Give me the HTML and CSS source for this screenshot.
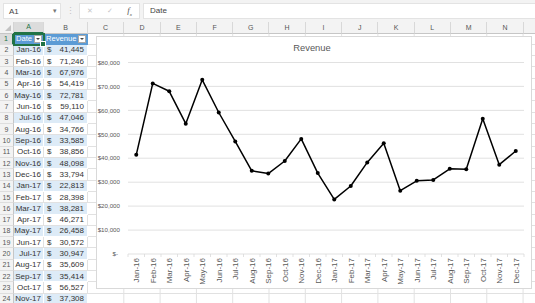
FILE: index.html
```html
<!DOCTYPE html>
<html lang="en">
<head>
    <meta charset="UTF-8">
    <meta name="viewport" content="width=device-width, initial-scale=1.0">
    <title>Revenue</title>
    <link rel="stylesheet" href="styles.css">
</head>
<body>

    <!-- Formula bar -->
    <div class="formula-bar">
        <div class="name-box"><span>A1</span><span class="caret">&#9662;</span></div>
        <div class="grip">&#8942;</div>
        <div class="fx-buttons">
            <span class="fx-btn">&#10005;</span>
            <span class="fx-btn">&#10003;</span>
            <span class="fx-btn fx">f<sub>x</sub></span>
        </div>
        <div class="formula-input">Date</div>
    </div>

    <!-- Worksheet -->
    <div class="sheet">
        <div class="col-heads">
            <div class="corner"></div>
            <div class="col-head active">A</div>
            <div class="col-head">B</div>
            <div class="col-head">C</div>
            <div class="col-head">D</div>
            <div class="col-head">E</div>
            <div class="col-head">F</div>
            <div class="col-head">G</div>
            <div class="col-head">H</div>
            <div class="col-head">I</div>
            <div class="col-head">J</div>
            <div class="col-head">K</div>
            <div class="col-head">L</div>
            <div class="col-head">M</div>
            <div class="col-head">N</div>
            <div class="col-head"></div>
        </div>

        <div class="row">
            <div class="num active">1</div>
            <div class="cell th selected">Date<span class="filter"></span></div>
            <div class="cell th">Revenue<span class="filter"></span></div>
            <div class="rest"></div>
        </div>

        <div class="rows">
            <div class="row"><div class="num">2</div><div class="cell date">Jan-16</div><div class="cell rev"><span>$</span><span>41,445</span></div><div class="rest"></div></div>
            <div class="row"><div class="num">3</div><div class="cell date">Feb-16</div><div class="cell rev"><span>$</span><span>71,246</span></div><div class="rest"></div></div>
            <div class="row"><div class="num">4</div><div class="cell date">Mar-16</div><div class="cell rev"><span>$</span><span>67,976</span></div><div class="rest"></div></div>
            <div class="row"><div class="num">5</div><div class="cell date">Apr-16</div><div class="cell rev"><span>$</span><span>54,419</span></div><div class="rest"></div></div>
            <div class="row"><div class="num">6</div><div class="cell date">May-16</div><div class="cell rev"><span>$</span><span>72,781</span></div><div class="rest"></div></div>
            <div class="row"><div class="num">7</div><div class="cell date">Jun-16</div><div class="cell rev"><span>$</span><span>59,110</span></div><div class="rest"></div></div>
            <div class="row"><div class="num">8</div><div class="cell date">Jul-16</div><div class="cell rev"><span>$</span><span>47,046</span></div><div class="rest"></div></div>
            <div class="row"><div class="num">9</div><div class="cell date">Aug-16</div><div class="cell rev"><span>$</span><span>34,766</span></div><div class="rest"></div></div>
            <div class="row"><div class="num">10</div><div class="cell date">Sep-16</div><div class="cell rev"><span>$</span><span>33,585</span></div><div class="rest"></div></div>
            <div class="row"><div class="num">11</div><div class="cell date">Oct-16</div><div class="cell rev"><span>$</span><span>38,856</span></div><div class="rest"></div></div>
            <div class="row"><div class="num">12</div><div class="cell date">Nov-16</div><div class="cell rev"><span>$</span><span>48,098</span></div><div class="rest"></div></div>
            <div class="row"><div class="num">13</div><div class="cell date">Dec-16</div><div class="cell rev"><span>$</span><span>33,794</span></div><div class="rest"></div></div>
            <div class="row"><div class="num">14</div><div class="cell date">Jan-17</div><div class="cell rev"><span>$</span><span>22,813</span></div><div class="rest"></div></div>
            <div class="row"><div class="num">15</div><div class="cell date">Feb-17</div><div class="cell rev"><span>$</span><span>28,398</span></div><div class="rest"></div></div>
            <div class="row"><div class="num">16</div><div class="cell date">Mar-17</div><div class="cell rev"><span>$</span><span>38,281</span></div><div class="rest"></div></div>
            <div class="row"><div class="num">17</div><div class="cell date">Apr-17</div><div class="cell rev"><span>$</span><span>46,271</span></div><div class="rest"></div></div>
            <div class="row"><div class="num">18</div><div class="cell date">May-17</div><div class="cell rev"><span>$</span><span>26,458</span></div><div class="rest"></div></div>
            <div class="row"><div class="num">19</div><div class="cell date">Jun-17</div><div class="cell rev"><span>$</span><span>30,572</span></div><div class="rest"></div></div>
            <div class="row"><div class="num">20</div><div class="cell date">Jul-17</div><div class="cell rev"><span>$</span><span>30,947</span></div><div class="rest"></div></div>
            <div class="row"><div class="num">21</div><div class="cell date">Aug-17</div><div class="cell rev"><span>$</span><span>35,609</span></div><div class="rest"></div></div>
            <div class="row"><div class="num">22</div><div class="cell date">Sep-17</div><div class="cell rev"><span>$</span><span>35,414</span></div><div class="rest"></div></div>
            <div class="row"><div class="num">23</div><div class="cell date">Oct-17</div><div class="cell rev"><span>$</span><span>56,527</span></div><div class="rest"></div></div>
            <div class="row"><div class="num">24</div><div class="cell date">Nov-17</div><div class="cell rev"><span>$</span><span>37,308</span></div><div class="rest"></div></div>
        </div>

        <!-- Chart floats over the cells -->
        <div class="chart">
            <svg viewBox="97 37 434 251" xmlns="http://www.w3.org/2000/svg">
                <text class="chart-title" x="312" y="50.5">Revenue</text>

                <g class="grid">
                    <line x1="128" y1="62.5" x2="524" y2="62.5" />
                    <line x1="128" y1="86.4" x2="524" y2="86.4" />
                    <line x1="128" y1="110.4" x2="524" y2="110.4" />
                    <line x1="128" y1="134.3" x2="524" y2="134.3" />
                    <line x1="128" y1="158.2" x2="524" y2="158.2" />
                    <line x1="128" y1="182.2" x2="524" y2="182.2" />
                    <line x1="128" y1="206.1" x2="524" y2="206.1" />
                    <line x1="128" y1="230.1" x2="524" y2="230.1" />
                    <line x1="128" y1="254" x2="524" y2="254" />
                </g>

                <g class="y-labels">
                    <text x="120" y="64.7">$80,000</text>
                    <text x="120" y="88.6">$70,000</text>
                    <text x="120" y="112.6">$60,000</text>
                    <text x="120" y="136.5">$50,000</text>
                    <text x="120" y="160.4">$40,000</text>
                    <text x="120" y="184.4">$30,000</text>
                    <text x="120" y="208.3">$20,000</text>
                    <text x="120" y="232.3">$10,000</text>
                    <text x="118" y="256.2">$-</text>
                </g>

                <path class="ticks" d="M128 254v3M144.5 254v3M161 254v3M177.5 254v3M194 254v3M210.5 254v3M227 254v3M243.5 254v3M260 254v3M276.5 254v3M293 254v3M309.5 254v3M326 254v3M342.5 254v3M359 254v3M375.5 254v3M392 254v3M408.5 254v3M425 254v3M441.5 254v3M458 254v3M474.5 254v3M491 254v3M507.5 254v3M524 254v3" />

                <g class="x-labels">
                    <text x="139" y="258" transform="rotate(-90 139 258)">Jan-16</text>
                    <text x="155.5" y="258" transform="rotate(-90 155.5 258)">Feb-16</text>
                    <text x="172" y="258" transform="rotate(-90 172 258)">Mar-16</text>
                    <text x="188.5" y="258" transform="rotate(-90 188.5 258)">Apr-16</text>
                    <text x="205" y="258" transform="rotate(-90 205 258)">May-16</text>
                    <text x="221.5" y="258" transform="rotate(-90 221.5 258)">Jun-16</text>
                    <text x="238" y="258" transform="rotate(-90 238 258)">Jul-16</text>
                    <text x="254.5" y="258" transform="rotate(-90 254.5 258)">Aug-16</text>
                    <text x="271" y="258" transform="rotate(-90 271 258)">Sep-16</text>
                    <text x="287.5" y="258" transform="rotate(-90 287.5 258)">Oct-16</text>
                    <text x="304" y="258" transform="rotate(-90 304 258)">Nov-16</text>
                    <text x="320.5" y="258" transform="rotate(-90 320.5 258)">Dec-16</text>
                    <text x="337" y="258" transform="rotate(-90 337 258)">Jan-17</text>
                    <text x="353.5" y="258" transform="rotate(-90 353.5 258)">Feb-17</text>
                    <text x="370" y="258" transform="rotate(-90 370 258)">Mar-17</text>
                    <text x="386.5" y="258" transform="rotate(-90 386.5 258)">Apr-17</text>
                    <text x="403" y="258" transform="rotate(-90 403 258)">May-17</text>
                    <text x="419.5" y="258" transform="rotate(-90 419.5 258)">Jun-17</text>
                    <text x="436" y="258" transform="rotate(-90 436 258)">Jul-17</text>
                    <text x="452.5" y="258" transform="rotate(-90 452.5 258)">Aug-17</text>
                    <text x="469" y="258" transform="rotate(-90 469 258)">Sep-17</text>
                    <text x="485.5" y="258" transform="rotate(-90 485.5 258)">Oct-17</text>
                    <text x="502" y="258" transform="rotate(-90 502 258)">Nov-17</text>
                    <text x="518.5" y="258" transform="rotate(-90 518.5 258)">Dec-17</text>
                </g>

                <polyline class="series" points="136.25,154.8 152.75,83.4 169.25,91.3 185.75,123.7 202.25,79.8 218.75,112.5 235.25,141.4 251.75,170.8 268.25,173.6 284.75,161 301.25,138.9 317.75,173.1 334.25,199.4 350.75,186 367.25,162.4 383.75,143.2 400.25,190.7 416.75,180.8 433.25,179.9 449.75,168.8 466.25,169.2 482.75,118.7 499.25,164.7 515.75,151" />

                <g class="markers">
                    <circle cx="136.25" cy="154.8" r="2" />
                    <circle cx="152.75" cy="83.4" r="2" />
                    <circle cx="169.25" cy="91.3" r="2" />
                    <circle cx="185.75" cy="123.7" r="2" />
                    <circle cx="202.25" cy="79.8" r="2" />
                    <circle cx="218.75" cy="112.5" r="2" />
                    <circle cx="235.25" cy="141.4" r="2" />
                    <circle cx="251.75" cy="170.8" r="2" />
                    <circle cx="268.25" cy="173.6" r="2" />
                    <circle cx="284.75" cy="161" r="2" />
                    <circle cx="301.25" cy="138.9" r="2" />
                    <circle cx="317.75" cy="173.1" r="2" />
                    <circle cx="334.25" cy="199.4" r="2" />
                    <circle cx="350.75" cy="186" r="2" />
                    <circle cx="367.25" cy="162.4" r="2" />
                    <circle cx="383.75" cy="143.2" r="2" />
                    <circle cx="400.25" cy="190.7" r="2" />
                    <circle cx="416.75" cy="180.8" r="2" />
                    <circle cx="433.25" cy="179.9" r="2" />
                    <circle cx="449.75" cy="168.8" r="2" />
                    <circle cx="466.25" cy="169.2" r="2" />
                    <circle cx="482.75" cy="118.7" r="2" />
                    <circle cx="499.25" cy="164.7" r="2" />
                    <circle cx="515.75" cy="151" r="2" />
                </g>
            </svg>
        </div>
    </div>

</body>
</html>
```

FILE: styles.css
```css
/* General styles */
* {
    box-sizing: border-box;
}

body {
    margin: 0;
    width: 535px;
    height: 303px;
    overflow: hidden;
    font-family: "Liberation Sans", Arial, sans-serif;
    background-color: #fff;
    color: #333;
}

/* Formula bar */
.formula-bar {
    display: flex;
    align-items: center;
    height: 22px;
    padding-left: 3px;
    background-color: #f3f3f3;
}

.name-box {
    display: flex;
    justify-content: space-between;
    align-items: center;
    width: 58px;
    height: 16px;
    padding: 0 3px 0 5px;
    background-color: #fff;
    border: 1px solid #e3e3e3;
    font-size: 8px;
    color: #444;
}

.caret {
    font-size: 7px;
    color: #777;
}

.grip {
    width: 18px;
    text-align: center;
    font-size: 9px;
    color: #c4c4c4;
}

.fx-buttons {
    display: flex;
    justify-content: space-around;
    align-items: center;
    width: 61px;
    height: 16px;
    background-color: #fff;
    border: 1px solid #e3e3e3;
}

.fx-btn {
    font-family: "DejaVu Sans", sans-serif;
    font-size: 7px;
    color: #c6c6c6;
}

.fx-btn.fx {
    font-family: "Liberation Serif", serif;
    font-style: italic;
    font-size: 9px;
    color: #555;
}

.fx sub {
    font-size: 5px;
}

.formula-input {
    flex: 1;
    height: 16px;
    margin-left: 3px;
    padding-left: 6px;
    background-color: #fff;
    border: 1px solid #e3e3e3;
    border-right: none;
    font-size: 8px;
    line-height: 14px;
    color: #444;
}

/* Sheet grid */
.sheet {
    position: relative;
}

.col-heads {
    display: grid;
    grid-template-columns: 14px 30px 44px repeat(13, 36.3px);
    height: 11.5px;
    background-color: #f3f3f3;
}

.corner {
    position: relative;
    border-right: 1px solid #d4d4d4;
    border-bottom: 1px solid #c6c6c6;
}

.corner::after {
    content: "";
    position: absolute;
    right: 2px;
    bottom: 2px;
    border-left: 6px solid transparent;
    border-bottom: 6px solid #c3c3c3;
}

.col-head {
    display: flex;
    justify-content: center;
    align-items: center;
    border-right: 1px solid #d8d8d8;
    border-bottom: 1px solid #c6c6c6;
    font-size: 7px;
    color: #555;
}

.col-head.active {
    background-color: #dcdcdc;
    border-bottom: 2px solid #217346;
    color: #217346;
}

.row {
    display: grid;
    grid-template-columns: 14px 30px 44px 1fr;
    height: 11.32px;
}

.num {
    display: flex;
    justify-content: center;
    align-items: center;
    background-color: #f3f3f3;
    border-right: 1px solid #c6c6c6;
    border-bottom: 1px solid #dedede;
    font-size: 7px;
    color: #555;
}

.num.active {
    background-color: #dcdcdc;
    border-right: 2px solid #217346;
    color: #217346;
}

.cell {
    display: flex;
    align-items: center;
    padding: 0 2px;
    border-right: 1px solid #e1e1e1;
    border-bottom: 1px solid #e1e1e1;
    font-size: 8px;
    white-space: nowrap;
}

.date {
    justify-content: flex-end;
}

.rev {
    justify-content: space-between;
    padding: 0 3px;
}

.rows .row:nth-child(odd) .cell {
    background-color: #ddebf7;
    border-color: #ffffff;
}

.th {
    justify-content: space-between;
    padding: 0 1px 0 2px;
    background-color: #5b9bd5;
    border-color: #5b9bd5;
    font-size: 7.6px;
    color: #fff;
}

.filter {
    display: flex;
    justify-content: center;
    align-items: center;
    width: 8px;
    height: 8px;
    background-color: #fff;
    border: 1px solid #a9a9a9;
}

.filter::after {
    content: "";
    border-left: 2px solid transparent;
    border-right: 2px solid transparent;
    border-top: 2.5px solid #444;
}

.selected {
    position: relative;
    outline: 2px solid #217346;
    outline-offset: -1px;
}

.selected::after {
    content: "";
    position: absolute;
    right: -3px;
    bottom: -3px;
    width: 4px;
    height: 4px;
    background-color: #217346;
    border: 1px solid #fff;
}

.rest {
    border-bottom: 1px solid #e1e1e1;
    background-image: linear-gradient(to left, #e1e1e1 1px, transparent 1px);
    background-size: 36.3px 100%;
}

/* Chart */
.chart {
    position: absolute;
    left: 96px;
    top: 14px;
    width: 436px;
    height: 253px;
    background-color: #fff;
    border: 1px solid #d9d9d9;
}

.chart svg {
    display: block;
    width: 100%;
    height: 100%;
}

.chart-title {
    font-size: 9.4px;
    fill: #595959;
    text-anchor: middle;
}

.grid line {
    stroke: #d9d9d9;
    stroke-width: 0.8;
}

.ticks {
    stroke: #d9d9d9;
    stroke-width: 0.8;
}

.y-labels text {
    font-size: 6.2px;
    fill: #595959;
    text-anchor: end;
}

.x-labels text {
    font-size: 8px;
    fill: #595959;
    text-anchor: end;
}

.series {
    fill: none;
    stroke: #000;
    stroke-width: 1.5;
    stroke-linejoin: round;
}

.markers circle {
    fill: #000;
}
```
